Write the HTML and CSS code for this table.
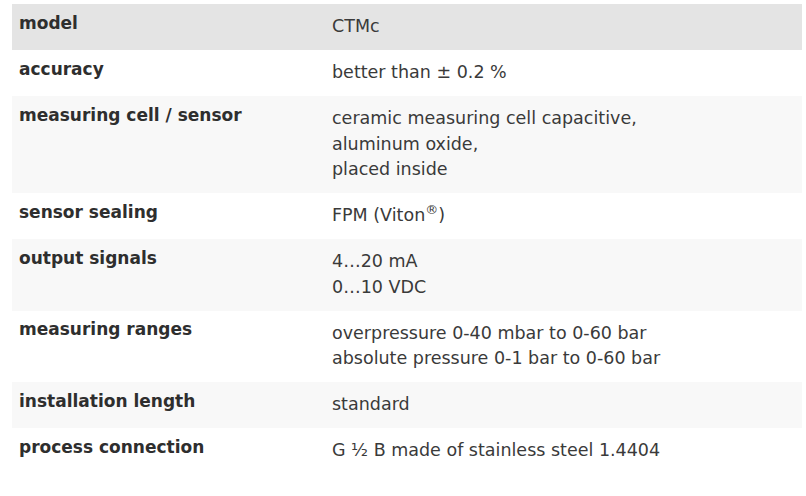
FILE: index.html
```html
<!DOCTYPE html>
<html lang="en">
<head>
<meta charset="utf-8">
<title>CTMc specifications</title>
<link rel="stylesheet" href="styles.css">
</head>
<body>
<div class="page">
  <table class="specs">
    <tbody>
      <tr class="row row-head">
        <th class="label">model</th>
        <td class="value">CTMc</td>
      </tr>
      <tr class="row">
        <th class="label">accuracy</th>
        <td class="value">better than ± 0.2 %</td>
      </tr>
      <tr class="row row-alt">
        <th class="label">measuring cell / sensor</th>
        <td class="value">ceramic measuring cell capacitive,<br>aluminum oxide,<br>placed inside</td>
      </tr>
      <tr class="row">
        <th class="label">sensor sealing</th>
        <td class="value">FPM (Viton<sup class="reg">®</sup>)</td>
      </tr>
      <tr class="row row-alt">
        <th class="label">output signals</th>
        <td class="value">4…20 mA<br>0…10 VDC</td>
      </tr>
      <tr class="row">
        <th class="label">measuring ranges</th>
        <td class="value">overpressure 0-40 mbar to 0-60 bar<br>absolute pressure 0-1 bar to 0-60 bar</td>
      </tr>
      <tr class="row row-alt">
        <th class="label">installation length</th>
        <td class="value">standard</td>
      </tr>
      <tr class="row">
        <th class="label">process connection</th>
        <td class="value">G ½ B made of stainless steel 1.4404</td>
      </tr>
    </tbody>
  </table>
</div>
</body>
</html>
```

FILE: styles.css
```css
html, body {
  margin: 0;
  padding: 0;
  background: #ffffff;
}

.page {
  padding: 4px 4px 0 12px;
}

.specs {
  width: 790px;
  border-collapse: collapse;
  border-spacing: 0;
  font-family: "DejaVu Sans", "Liberation Sans", sans-serif;
  font-size: 17px;
  line-height: 25.5px;
}

.row {
  background: #ffffff;
}

.row-head {
  background: #e4e4e4;
}

.row-alt {
  background: #f8f8f8;
}

.label {
  width: 299px;
  padding: 6.5px 7px 0 7px;
  text-align: left;
  vertical-align: top;
  font-weight: 700;
  color: #2e2e2e;
}

.value {
  padding: 10px 7px 10.5px 7px;
  vertical-align: top;
  font-size: 17.5px;
  font-weight: 400;
  color: #3a3a3a;
}

.reg {
  font-size: 13px;
  line-height: 0;
  vertical-align: 7px;
}
```
